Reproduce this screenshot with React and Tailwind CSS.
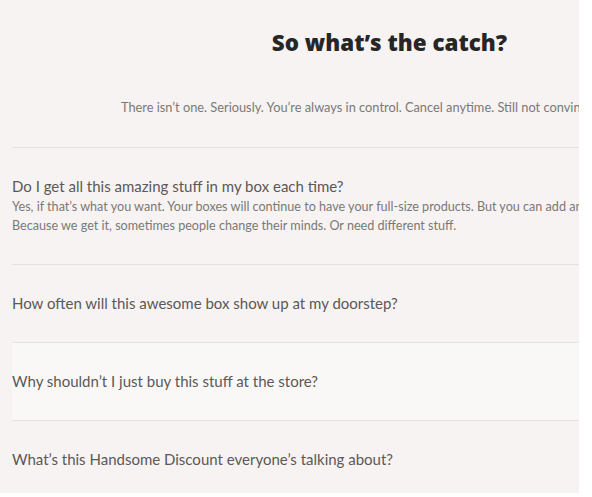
import React from 'react'

const faqs = [
  {
    q: 'Do I get all this amazing stuff in my box each time?',
    a: [
      'Yes, if that’s what you want. Your boxes will continue to have your full-size products. But you can add and remove products anytime.',
      'Because we get it, sometimes people change their minds. Or need different stuff.',
    ],
  },
  { q: 'How often will this awesome box show up at my doorstep?' },
  { q: 'Why shouldn’t I just buy this stuff at the store?', hover: true },
  { q: 'What’s this Handsome Discount everyone’s talking about?' },
]

export default function App() {
  return (
    <div className="w-[579px] h-[493px] overflow-hidden bg-[#f7f3f2] font-['Lato',sans-serif]">
      <div className="w-[767px] pl-3">
        <h2 className="pt-[29px] text-center text-[22.4px] leading-7 font-extrabold text-[#262626] font-['Open_Sans',sans-serif]">
          So what’s the catch?
        </h2>
        <p className="mt-[40px] text-center text-[12.8px] leading-5 text-[#7b7877] whitespace-nowrap">
          There isn’t one. Seriously. You’re always in control. Cancel anytime. Still not convinced? Read on.
        </p>

        <div className="mt-[30px]">
          {faqs.map((f, i) => (
            <div
              key={i}
              className={
                'border-t border-[#e6e1df] py-[28px] ' + (f.hover ? 'bg-[#faf8f7]' : '')
              }
            >
              <div className="text-[15px] leading-[21px] text-[#5b5857]">{f.q}</div>
              {f.a && (
                <div className="text-[12.6px] leading-[19px] text-[#7b7877] mb-px">
                  {f.a.map((line, j) => (
                    <div key={j} className="whitespace-nowrap">{line}</div>
                  ))}
                </div>
              )}
            </div>
          ))}
        </div>
      </div>
    </div>
  )
}
